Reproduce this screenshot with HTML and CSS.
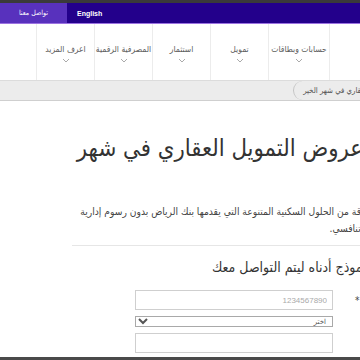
FILE: index.html
```html
<!DOCTYPE html>
<html lang="ar">
<head>
    <meta charset="UTF-8">
    <meta name="viewport" content="width=device-width, initial-scale=1.0">
    <title>عروض التمويل العقاري</title>
    <link rel="stylesheet" href="styles.css">
</head>
<body>
    <div class="page" dir="rtl">
        <div class="topline"></div>
        <header class="topbar">
            <div class="top-links">
                <a class="lang" href="#" lang="en">English</a>
                <a class="contact" href="#">تواصل معنا</a>
            </div>
        </header>
        <nav class="mainnav">
            <ul>
                <li>حسابات وبطاقات<svg class="chev" viewBox="0 0 8 5"><polyline points="1,1 4,4 7,1"/></svg></li>
                <li>تمويل<svg class="chev" viewBox="0 0 8 5"><polyline points="1,1 4,4 7,1"/></svg></li>
                <li>استثمار<svg class="chev" viewBox="0 0 8 5"><polyline points="1,1 4,4 7,1"/></svg></li>
                <li>المصرفية الرقمية<svg class="chev" viewBox="0 0 8 5"><polyline points="1,1 4,4 7,1"/></svg></li>
                <li>اعرف المزيد<svg class="chev" viewBox="0 0 8 5"><polyline points="1,1 4,4 7,1"/></svg></li>
            </ul>
        </nav>
        <div class="crumbs">
            <span class="crumb">التمويل العقاري في شهر الخير</span>
        </div>
        <main class="content">
            <h1>عروض التمويل العقاري في شهر</h1>
            <p class="intro">تعرف على باقة من الحلول السكنية المتنوعة التي يقدمها بنك الرياض بدون رسوم إدارية وبهامش ربح تنافسي.</p>
            <hr>
            <h2>املأ النموذج أدناه ليتم التواصل معك</h2>
            <form class="lead-form">
                <div class="field">
                    <label for="mobile">رقم الجوال *</label>
                    <input type="text" id="mobile" placeholder="1234567890">
                </div>
                <div class="field">
                    <label for="city"></label>
                    <select id="city">
                        <option>اختر</option>
                    </select>
                </div>
                <div class="field">
                    <label for="name"></label>
                    <input type="text" id="name">
                </div>
            </form>
        </main>
        <div class="bottom-bar"></div>
    </div>
</body>
</html>
```
FILE: styles.css
```css
html, body {
    margin: 0;
    overflow: hidden;
    background-color: #fff;
}
.page {
    width: 440px;
    font-family: "DejaVu Sans Condensed", "DejaVu Sans", sans-serif;
    font-stretch: condensed;
    color: #333;
}
.topline {
    height: 3px;
    background-color: #3a3a3a;
}
.topbar {
    height: 20px;
    display: flex;
    background-color: #23008b;
    border-bottom: 1px solid #9c72e2;
}
.top-links {
    margin-right: auto;
    display: flex;
}
.top-links a {
    display: flex;
    align-items: center;
    color: #fff;
    text-decoration: none;
    font-size: 7px;
}
.lang {
    font-family: "Liberation Sans", sans-serif;
    font-weight: bold;
    padding: 0 10px;
}
.contact {
    width: 67px;
    justify-content: center;
    background-color: #5831bd;
}
.mainnav {
    height: 56px;
}
.mainnav ul {
    display: flex;
    height: 100%;
    margin: 0;
    padding: 0 110px 0 0;
    list-style: none;
}
.mainnav li {
    box-sizing: border-box;
    width: 58px;
    display: flex;
    flex-direction: column;
    align-items: center;
    justify-content: center;
    gap: 4px;
    padding-top: 2px;
    font-size: 8.5px;
    color: #5e5e5e;
    white-space: nowrap;
    border-left: 1px solid #ececec;
}
.mainnav li:first-child {
    width: 62px;
    border-right: 1px solid #ececec;
}
.chev {
    width: 8px;
    height: 5px;
    fill: none;
    stroke: #aaa;
    stroke-width: 1;
}
.crumbs {
    height: 19px;
    display: flex;
    background-color: #ececec;
    border-top: 1px solid #dcdcdc;
    border-bottom: 1px solid #cfcfcf;
    padding-right: 46px;
}
.crumb {
    display: flex;
    align-items: center;
    padding: 0 2px 0 9px;
    font-size: 7.8px;
    color: #555;
    border-left: 1px solid #c4c4c4;
    border-radius: 10px 0 0 10px / 10px 0 0 10px;
}
.content {
    padding: 0 30px 0 72px;
}
h1 {
    margin: 33px 47px 0 0;
    font-size: 23.7px;
    font-weight: normal;
    line-height: 29px;
    white-space: nowrap;
    color: #333;
}
.intro {
    margin: 40px 0 0;
    font-size: 10.2px;
    line-height: 17px;
    color: #444;
}
hr {
    margin: 8px 0 0;
    border: none;
    border-top: 1px solid #e6e6e6;
}
h2 {
    margin: 10px 14px 0 0;
    font-size: 14px;
    font-weight: normal;
    line-height: 22px;
    white-space: nowrap;
    color: #333;
}
.lead-form {
    margin-top: 12px;
}
.field {
    display: flex;
    align-items: center;
    margin-bottom: 6px;
}
.field:last-child {
    margin-bottom: 4px;
}
.field label {
    box-sizing: border-box;
    width: 77px;
    padding-left: 22px;
    text-align: end;
    white-space: nowrap;
    font-size: 10px;
    color: #444;
}
input[type="text"] {
    box-sizing: border-box;
    width: 198px;
    height: 20px;
    padding: 0 5px;
    border: 1px solid #cfcfcf;
    font-family: "Liberation Sans", sans-serif;
    font-size: 8px;
}
input::placeholder {
    color: #aaa;
}
select {
    box-sizing: border-box;
    width: 198px;
    height: 11px;
    padding: 0 2px;
    border: 1px solid #a9a9a9;
    border-radius: 0;
    font-family: "DejaVu Sans", sans-serif;
    font-size: 7px;
    color: #555;
    background-color: #fff;
}
.bottom-bar {
    height: 20px;
    background-color: #4a4a4a;
}
```
